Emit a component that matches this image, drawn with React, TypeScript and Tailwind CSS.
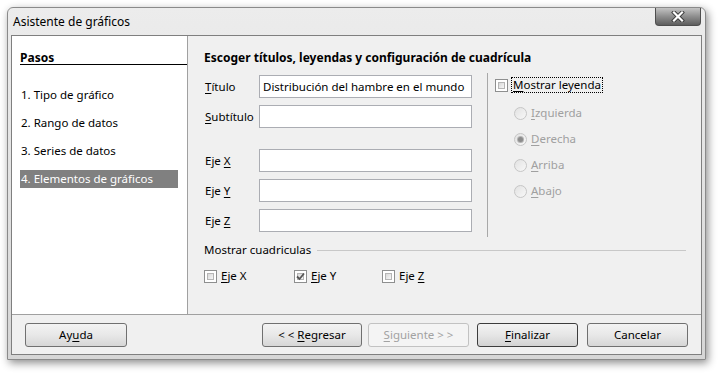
import React from 'react';

function Key({ children }: { children: React.ReactNode }) {
  return <span className="underline underline-offset-2 decoration-1">{children}</span>;
}

function CheckBox({ checked = false }: { checked?: boolean }) {
  return (
    <span className="w-[13px] h-[13px] border border-[#8e8f8f] bg-white p-[2px] flex shrink-0">
      <span className="flex-1 border border-[#b5b5b5] bg-gradient-to-br from-[#d8d8d8] to-[#f7f7f7] flex items-center justify-center">
        {checked && (
          <svg width="9" height="9" viewBox="0 0 9 9" className="-m-[2px]">
            <path d="M1 4.5 L3.5 7 L8 1.5" fill="none" stroke="#555" strokeWidth="1.8" />
          </svg>
        )}
      </span>
    </span>
  );
}

function Radio({ checked = false }: { checked?: boolean }) {
  return (
    <span className="w-[13px] h-[13px] rounded-full border border-[#c6c6c6] bg-gradient-to-br from-[#e2e2e2] to-[#f8f8f8] flex items-center justify-center shrink-0">
      {checked && <span className="w-[5px] h-[5px] rounded-full bg-[#8c8c8c] ring-1 ring-[#b4b4b4]" />}
    </span>
  );
}

function Button({
  children,
  width,
  primary = false,
  disabled = false,
}: {
  children: React.ReactNode;
  width: string;
  primary?: boolean;
  disabled?: boolean;
}) {
  const tone = disabled
    ? 'border-[#c2c2c2] bg-[#f4f4f4] text-[#a2a2a2]'
    : primary
      ? 'border-[#3d3d3d] bg-gradient-to-b from-[#f3f3f3] via-[#e6e6e6] to-[#d2d2d2] text-black'
      : 'border-[#707070] bg-gradient-to-b from-[#f3f3f3] via-[#e8e8e8] to-[#d6d6d6] text-black';
  return (
    <div className={`${width} h-[24px] rounded-[3px] border flex items-center justify-center shrink-0 whitespace-pre ${tone}`}>
      {children}
    </div>
  );
}

function Field({ label, value = '', mt }: { label: React.ReactNode; value?: string; mt: string }) {
  return (
    <div className={`flex items-center h-[23px] ${mt}`}>
      <div className="w-[55px] pl-[1px]">{label}</div>
      <div className="w-[213px] h-[23px] border border-[#abadb3] bg-white px-[3px] flex items-center whitespace-nowrap overflow-hidden">
        {value}
      </div>
    </div>
  );
}

export default function App() {
  return (
    <div className="w-[720px] h-[374px] bg-white overflow-hidden pt-[7px] pl-[7px] font-['Noto_Sans',sans-serif] text-[11.5px] text-black leading-[16px]">
      <div className="w-[699px] h-[353px] rounded-t-[6px] border border-[#8a8a8a] bg-gradient-to-b from-[#ececec] via-[#e2e2e2] to-[#d6d6d6] shadow-[2px_3px_9px_rgba(0,0,0,0.45)] flex flex-col px-[3px] pb-[4px]">
        {/* title bar */}
        <div className="h-[27px] flex items-start shrink-0">
          <div className="pl-[2px] pt-[6px] flex-1 text-[12px]">Asistente de gráficos</div>
          <div className="w-[46px] h-[18px] mr-[1px] rounded-b-[4px] border border-t-0 border-[#4e4e4e] bg-gradient-to-b from-[#c4c4c4] via-[#8e8e8e] to-[#5e5e5e] flex items-center justify-center">
            <svg width="14" height="11" viewBox="0 0 14 11">
              <path d="M3 1.5 L11 9.5 M11 1.5 L3 9.5" stroke="#3a3a3a" strokeWidth="4" strokeLinecap="square" />
              <path d="M3 1.5 L11 9.5 M11 1.5 L3 9.5" stroke="#ffffff" strokeWidth="2.2" strokeLinecap="square" />
            </svg>
          </div>
        </div>

        {/* client area */}
        <div className="flex-1 border border-[#7f7f7f] bg-[#f0f0f0] flex flex-col">
          <div className="h-[279px] flex border-b border-[#a0a0a0] shrink-0">
            {/* steps */}
            <div className="w-[176px] bg-white border-r border-[#a0a0a0] pl-[8px] pt-[14px]">
              <div className="font-bold text-[12px] border-b border-black h-[15px] leading-[16px]">
                <span className="underline underline-offset-2">Pasos</span>
              </div>
              <div className="flex flex-col gap-[10px] mt-[21px] w-[158px]">
                <div className="h-[18px] leading-[18px] pl-[1px]">1. Tipo de gráfico</div>
                <div className="h-[18px] leading-[18px] pl-[1px]">2. Rango de datos</div>
                <div className="h-[18px] leading-[18px] pl-[1px]">3. Series de datos</div>
                <div className="h-[18px] leading-[18px] pl-[1px] bg-[#808080] text-white">4. Elementos de gráficos</div>
              </div>
            </div>

            {/* page */}
            <div className="flex-1 pl-[16px] pt-[14px] flex flex-col">
              <div className="font-bold text-[12px] h-[16px]">Escoger títulos, leyendas y configuración de cuadrícula</div>
              <div className="flex mt-[7px]">
                <div className="flex flex-col pt-[2px]">
                  <Field label={<><Key>T</Key>ítulo</>} value="Distribución del hambre en el mundo" mt="" />
                  <Field label={<><Key>S</Key>ubtítulo</>} mt="mt-[7px]" />
                  <Field label={<>Eje <Key>X</Key></>} mt="mt-[21px]" />
                  <Field label={<>Eje <Key>Y</Key></>} mt="mt-[7px]" />
                  <Field label={<>Eje <Key>Z</Key></>} mt="mt-[7px]" />
                </div>
                <div className="w-px h-[164px] bg-[#a8a8a8] ml-[15px]" />
                <div className="pl-[7px] pt-[5px] flex flex-col">
                  <div className="flex items-center gap-[3px] h-[14px]">
                    <CheckBox />
                    <span className="border border-dotted border-black px-[1px] leading-[14px]">
                      <Key>M</Key>ostrar leyenda
                    </span>
                  </div>
                  <div className="flex flex-col gap-[10px] mt-[13px] ml-[19px] text-[#a0a0a0]">
                    <div className="flex items-center gap-[4px] h-[16px]"><Radio /><span><Key>I</Key>zquierda</span></div>
                    <div className="flex items-center gap-[4px] h-[16px]"><Radio checked /><span><Key>D</Key>erecha</span></div>
                    <div className="flex items-center gap-[4px] h-[16px]"><Radio /><span><Key>A</Key>rriba</span></div>
                    <div className="flex items-center gap-[4px] h-[16px]"><Radio /><span><Key>A</Key>bajo</span></div>
                  </div>
                </div>
              </div>
              <div className="flex items-center mt-[5px] h-[16px] pr-[15px]">
                <span>Mostrar cuadriculas</span>
                <div className="flex-1 h-px bg-[#c8c8c8] ml-[6px]" />
              </div>
              <div className="flex items-center mt-[10px] h-[16px]">
                <div className="w-[90px] flex items-center gap-[4px]"><CheckBox /><span><Key>E</Key>je X</span></div>
                <div className="w-[88px] flex items-center gap-[4px]"><CheckBox checked /><span><Key>E</Key>je Y</span></div>
                <div className="flex items-center gap-[4px]"><CheckBox /><span>Eje <Key>Z</Key></span></div>
              </div>
            </div>
          </div>

          {/* buttons */}
          <div className="flex-1 flex items-center pl-[13px] pr-[13px] pt-[1px]">
            <Button width="w-[102px]">Ay<Key>u</Key>da</Button>
            <div className="flex-1" />
            <Button width="w-[100px]">{'< < '}<Key>R</Key>egresar</Button>
            <div className="w-[6px]" />
            <Button width="w-[101px]" disabled><Key>S</Key>{'iguiente > >'}</Button>
            <div className="w-[8px]" />
            <Button width="w-[101px]" primary><Key>F</Key>inalizar</Button>
            <div className="w-[9px]" />
            <Button width="w-[101px]">Cancelar</Button>
          </div>
        </div>
      </div>
    </div>
  );
}
